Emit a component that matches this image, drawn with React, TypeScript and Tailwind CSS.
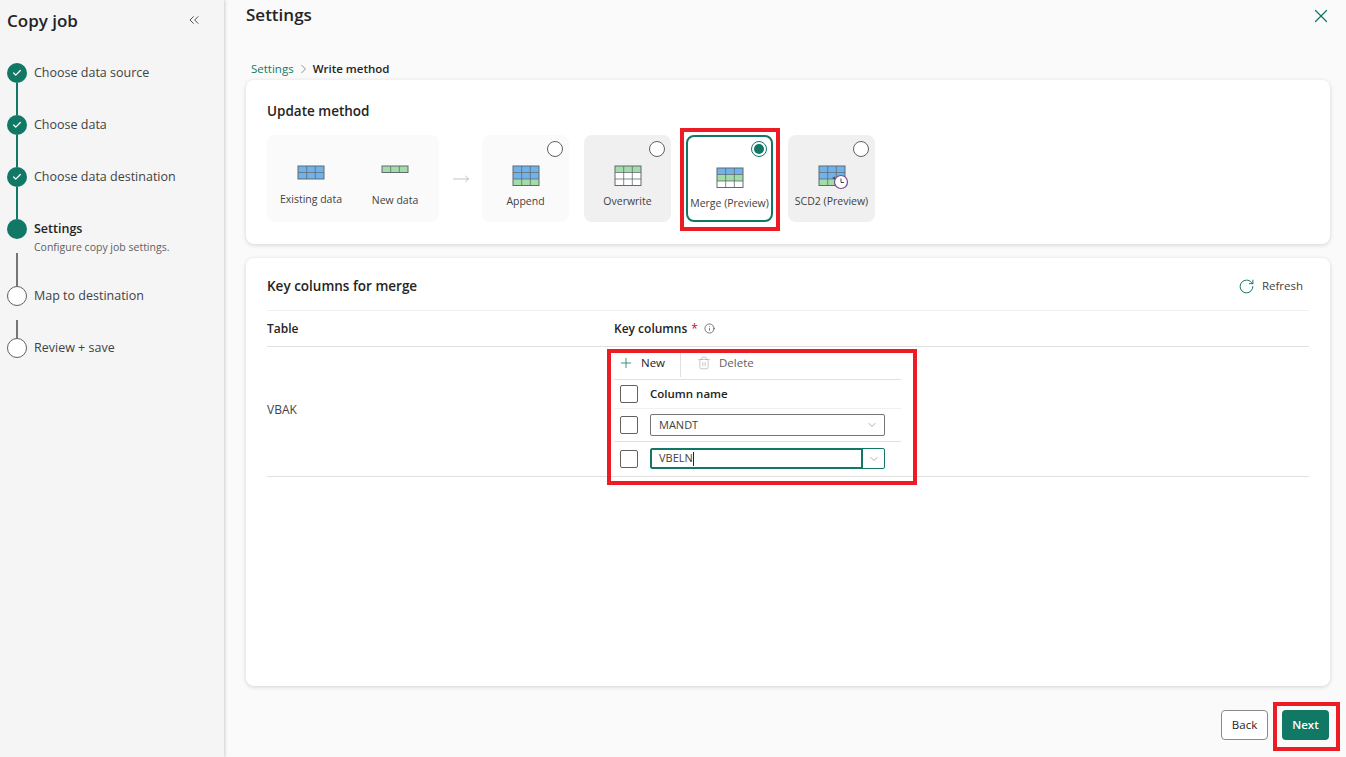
import { Check, ChevronDown, ChevronsLeft, Info, MoveRight, Plus, RotateCw, Trash2, X } from "lucide-react";

const BLUE = "#6fb2ec";
const GREEN = "#a3dca6";
const WHITE = "#ffffff";

function TableIcon({ rows, clock }: { rows: string[]; clock?: boolean }) {
  const rowH = 6.5;
  const h = rows.length * rowH + 1;
  return (
    <svg width="28" height={h + 1} viewBox={`0 0 28 ${h + 1}`} className="overflow-visible">
      {rows.map((fill, i) => (
        <rect key={i} x="1" y={1 + i * rowH} width="26" height={rowH} fill={fill} />
      ))}
      {rows.slice(1).map((_, i) => (
        <line key={i} x1="1" x2="27" y1={1 + (i + 1) * rowH} y2={1 + (i + 1) * rowH} stroke="#5f6b70" strokeWidth="0.8" />
      ))}
      <line x1="9.7" x2="9.7" y1="1" y2={h} stroke="#5f6b70" strokeWidth="0.8" />
      <line x1="18.3" x2="18.3" y1="1" y2={h} stroke="#5f6b70" strokeWidth="0.8" />
      <rect x="1" y="1" width="26" height={h - 1} fill="none" stroke="#5f6b70" strokeWidth="1" />
      {clock && (
        <g>
          <circle cx="23" cy="17" r="6.5" fill="#ffffff" stroke="#7b4a8c" strokeWidth="1.2" />
          <path d="M23 13.5V17.5H26" fill="none" stroke="#4a4a4a" strokeWidth="1" />
          <path d="M14 13l3 -1.5v3z" fill="#4a4a4a" />
        </g>
      )}
    </svg>
  );
}

function Step({
  label,
  state,
  sub,
  last,
  lineDone,
}: {
  label: string;
  state: "done" | "active" | "todo";
  sub?: string;
  last?: boolean;
  lineDone?: boolean;
}) {
  return (
    <div className={`flex gap-[7px] ${sub ? "h-[67px]" : "h-[52px]"}`}>
      <div className="flex w-5 flex-col items-center">
        {state === "todo" ? (
          <div className="h-5 w-5 shrink-0 rounded-full border border-[#616161] bg-white" />
        ) : (
          <div className="flex h-5 w-5 shrink-0 items-center justify-center rounded-full bg-[#117865]">
            {state === "done" && <Check size={10} strokeWidth={3} className="text-white" />}
          </div>
        )}
        {!last && (
          <div className={`w-0.5 flex-1 ${lineDone ? "bg-[#117865]" : "mt-[14px] bg-[#757575]"} ${state === "todo" ? "mt-0" : ""}`} />
        )}
      </div>
      <div className="min-w-0">
        <div className={`text-[12.5px] leading-5 ${state === "active" ? "font-semibold text-[#242424]" : "text-[#424242]"}`}>{label}</div>
        {sub && <div className="mt-px text-[10.5px] leading-[14px] text-[#616161]">{sub}</div>}
      </div>
    </div>
  );
}

function MethodCard({
  label,
  rows,
  variant,
  clock,
}: {
  label: string;
  rows: string[];
  variant: "plain" | "gray" | "selected";
  clock?: boolean;
}) {
  const cls =
    variant === "selected"
      ? "border-2 border-[#117865] bg-white"
      : variant === "gray"
        ? "bg-[#f0f0f0]"
        : "bg-[#fafafa]";
  return (
    <div className={`relative flex h-[87px] w-[87px] flex-col items-center rounded-lg pt-[30px] ${cls} ${variant === "selected" ? "pt-[28px]" : ""}`}>
      {variant === "selected" ? (
        <div className="absolute right-[4px] top-[4px] flex h-4 w-4 items-center justify-center rounded-full border border-[#117865] bg-white">
          <div className="h-2.5 w-2.5 rounded-full bg-[#117865]" />
        </div>
      ) : (
        <div className="absolute right-1.5 top-1.5 h-4 w-4 rounded-full border border-[#616161] bg-white" />
      )}
      <TableIcon rows={rows} clock={clock} />
      <div className="mt-1.5 whitespace-nowrap text-[10.5px] leading-4 text-[#424242]">{label}</div>
    </div>
  );
}

function CheckBox() {
  return <div className="h-[18px] w-[18px] shrink-0 rounded-[2px] border border-[#616161] bg-white" />;
}

function Highlight({ className }: { className: string }) {
  return <div className={`pointer-events-none absolute border-4 border-[#ed1c24] ${className}`} />;
}

export default function App() {
  return (
    <div className="flex h-screen w-full overflow-hidden bg-[#fafafa] text-[#242424] [font-family:'Open_Sans','Noto_Sans',sans-serif]">
      <aside className="flex w-[224px] shrink-0 flex-col bg-[#f5f5f5] pl-[7px] shadow-[1px_0_3px_rgba(0,0,0,0.18)]">
        <div className="flex h-[63px] items-start justify-between pr-[22px] pt-[9px]">
          <h1 className="text-[17px] font-semibold leading-6">Copy job</h1>
          <ChevronsLeft size={16} strokeWidth={1.4} className="mt-[3px] text-[#424242]" />
        </div>
        <div>
          <Step label="Choose data source" state="done" lineDone />
          <Step label="Choose data" state="done" lineDone />
          <Step label="Choose data destination" state="done" lineDone />
          <Step label="Settings" state="active" sub="Configure copy job settings." />
          <Step label="Map to destination" state="todo" />
          <Step label="Review + save" state="todo" last />
        </div>
      </aside>

      <main className="relative flex min-w-0 flex-1 flex-col pl-[22px] pr-4">
        <div className="flex h-[59px] items-start justify-between pt-[3px]">
          <h2 className="text-[17px] font-semibold leading-6">Settings</h2>
          <X size={22} strokeWidth={1.4} className="mr-[-2px] mt-0.5 text-[#117865]" />
        </div>
        <div className="flex h-[19px] items-center gap-1.5 pl-[5px] text-[11.5px]">
          <span className="text-[#117865]">Settings</span>
          <svg width="7" height="10" viewBox="0 0 7 10"><path d="M1.5 1l4 4-4 4" fill="none" stroke="#757575" strokeWidth="0.8" /></svg>
          <span className="font-semibold">Write method</span>
        </div>

        <section className="mt-0.5 h-[164px] rounded-lg bg-white px-[21px] pt-[22px] shadow-[0_1px_4px_rgba(0,0,0,0.16)]">
          <h3 className="text-[13.5px] font-semibold leading-[18px]">Update method</h3>
          <div className="mt-[15px] flex items-center">
            <div className="flex h-[87px] w-[172px] rounded-lg bg-[#fafafa]">
              <div className="flex w-[88px] flex-col items-center pt-[30px]">
                <TableIcon rows={[BLUE, BLUE]} />
                <div className="mt-[11px] text-[10.5px] leading-4 text-[#424242]">Existing data</div>
              </div>
              <div className="flex w-[80px] flex-col items-center pt-[30px]">
                <TableIcon rows={[GREEN]} />
                <div className="mt-[18px] text-[10.5px] leading-4 text-[#424242]">New data</div>
              </div>
            </div>
            <div className="flex w-[43px] justify-center">
              <MoveRight size={18} strokeWidth={1} className="text-[#b0b0b0]" />
            </div>
            <div className="flex gap-[15px]">
              <MethodCard label="Append" rows={[BLUE, BLUE, GREEN]} variant="plain" />
              <MethodCard label="Overwrite" rows={[GREEN, WHITE, WHITE]} variant="gray" />
              <MethodCard label="Merge (Preview)" rows={[BLUE, GREEN, WHITE]} variant="selected" />
              <MethodCard label="SCD2 (Preview)" rows={[BLUE, BLUE, GREEN]} variant="gray" clock />
            </div>
          </div>
        </section>

        <section className="mt-3.5 flex h-[428px] flex-col rounded-lg bg-white px-[21px] shadow-[0_1px_4px_rgba(0,0,0,0.16)]">
          <div className="flex h-[53px] items-center justify-between border-b border-[#f0f0f0] pt-1">
            <h3 className="text-[13.5px] font-semibold">Key columns for merge</h3>
            <div className="flex items-center gap-[7px] pr-1.5 text-[11.5px] text-[#424242]">
              <RotateCw size={17} strokeWidth={1.4} className="text-[#117865]" />
              Refresh
            </div>
          </div>
          <div className="flex h-9 items-center border-b border-[#e0e0e0] text-[12px] font-semibold">
            <div className="w-[347px]">Table</div>
            <div className="flex items-center gap-1">
              Key columns <span className="font-normal text-[#c50f1f]">*</span>
              <Info size={11} strokeWidth={1.5} className="ml-0.5 text-[#424242]" />
            </div>
          </div>
          <div className="flex h-[130px] border-b border-[#e0e0e0]">
            <div className="flex w-[347px] items-center pb-[3px] text-[12px] text-[#424242]">VBAK</div>
            <div className="w-[287px]">
              <div className="flex h-[33px] items-center border-b border-[#e0e0e0] text-[11.5px]">
                <div className="flex h-[27px] w-[67px] items-center gap-[7px] border-r border-[#e0e0e0] pl-1">
                  <Plus size={16} strokeWidth={1.2} className="text-[#117865]" />
                  New
                </div>
                <div className="flex items-center gap-2 pl-4 text-[#616161]">
                  <Trash2 size={14} strokeWidth={1.1} className="text-[#a8a8a8]" />
                  Delete
                </div>
              </div>
              <div className="flex h-[29px] items-center gap-3 border-b border-[#f0f0f0] pl-1.5 text-[11.5px] font-semibold">
                <CheckBox />
                Column name
              </div>
              <div className="flex h-[33px] items-center gap-3 border-b border-[#e0e0e0] pl-1.5">
                <CheckBox />
                <div className="flex h-[22px] w-[235px] items-center justify-between rounded-[2px] border border-[#757575] pl-2 pr-1.5 text-[11px] text-[#424242]">
                  MANDT
                  <ChevronDown size={12} strokeWidth={1.2} className="text-[#757575]" />
                </div>
              </div>
              <div className="flex h-[33px] items-center gap-3 pl-1.5">
                <CheckBox />
                <div className="flex h-[21px] w-[235px] items-center rounded-[2px] border border-[#117865] text-[11px] text-[#424242]">
                  <div className="flex h-full flex-1 items-center border-r-2 border-[#117865] pl-2 [box-shadow:inset_0_-1px_0_#117865,inset_0_1px_0_#117865,inset_1px_0_0_#117865]">
                    VBELN<span className="h-3.5 w-px bg-[#242424]" />
                  </div>
                  <div className="flex w-[21px] justify-center">
                    <ChevronDown size={12} strokeWidth={1.2} className="text-[#757575]" />
                  </div>
                </div>
              </div>
            </div>
          </div>
        </section>

        <div className="flex flex-1 items-start justify-end gap-[14px] pr-[1px] pt-[24px]">
          <button className="h-[30px] w-[47px] rounded border border-[#8a8a8a] bg-white text-[11.5px] text-[#242424]">Back</button>
          <button className="h-[30px] w-[47px] rounded bg-[#117865] text-[11.5px] font-semibold text-white">Next</button>
        </div>

        <Highlight className="left-[456px] top-[128px] h-[103px] w-[100px]" />
        <Highlight className="left-[383px] top-[349px] h-[136px] w-[310px]" />
        <Highlight className="left-[1049px] top-[702px] h-[49px] w-[67px]" />
      </main>
    </div>
  );
}
